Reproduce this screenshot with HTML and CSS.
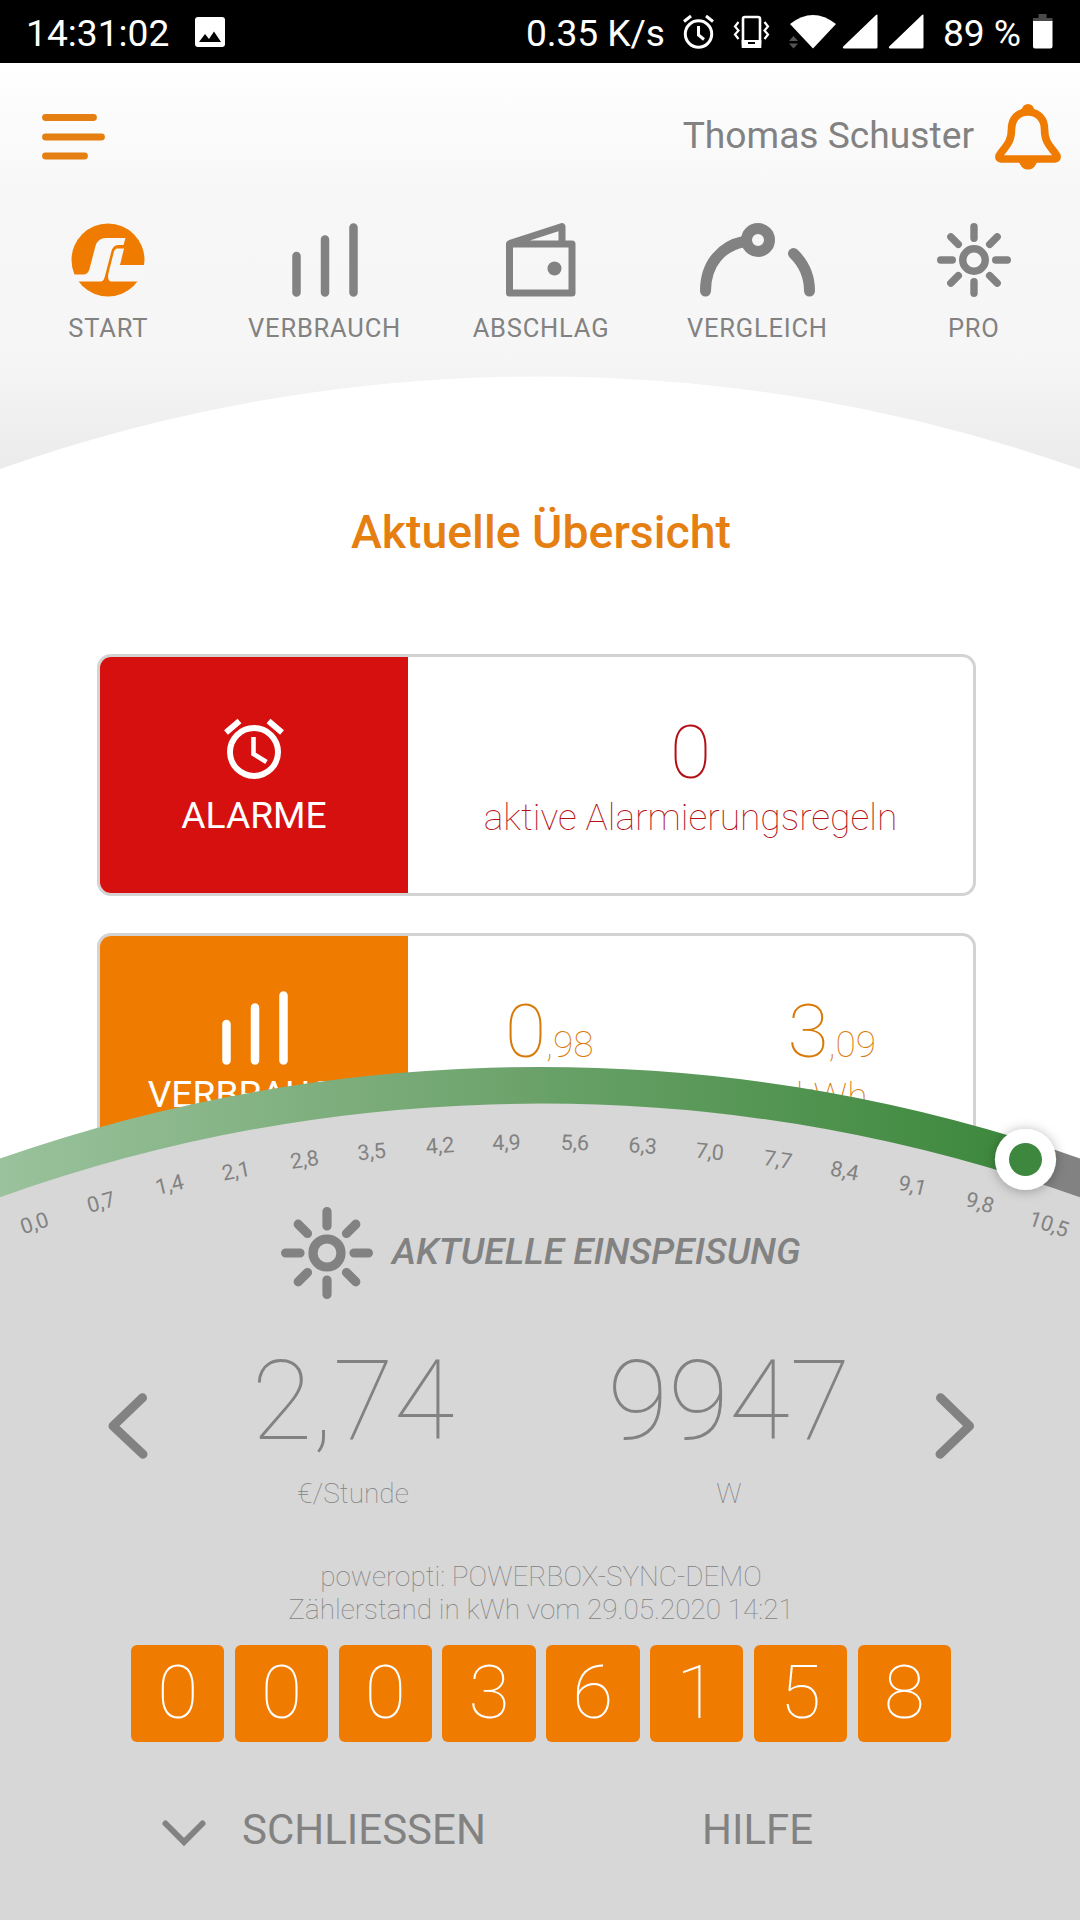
FILE: index.html
```html
<!DOCTYPE html>
<html lang="de">
<head>
<meta charset="utf-8">
<title>Aktuelle Übersicht</title>
<link rel="stylesheet" href="styles.css">
</head>
<body>
<svg class="defs" width="0" height="0" aria-hidden="true">
  <symbol id="sun" viewBox="-46 -46 92 92">
    <g fill="none" stroke="currentColor" stroke-width="9.2" stroke-linecap="round">
      <circle r="14"/>
      <path d="M0-41.4V-27M0 41.4V27M-41.4 0H-27M41.4 0H27M-28.8-28.8L-19.5-19.5M28.8 28.8L19.5 19.5M-28.8 28.8L-19.5 19.5M28.8-28.8L19.5-19.5"/>
    </g>
  </symbol>
  <symbol id="bars" viewBox="0 0 66 74">
    <path d="M4.5 33V69.5M33 16.500V69.500M61.500 4.500V69.500" fill="none" stroke="currentColor" stroke-width="8.500" stroke-linecap="round"/>
  </symbol>
</svg>

<div class="screen">
  <div class="status">
    <span class="clock">14:31:02</span>
    <svg class="pic" viewBox="0 0 30 30"><rect width="30" height="30" rx="3" fill="#fff"/><path d="M4 25l6-8 4 5 5-7.500 7 10.500z" fill="#000"/></svg>
    <span class="speed">0.35 K/s</span>
    <svg class="status-icons" viewBox="0 0 240 36">
      <g fill="none" stroke="#fff" stroke-width="3">
        <circle cx="15.500" cy="20" r="13.200"/>
        <path d="M15.500 12v9l5.500 4.500M1 7.500l7-5.500M30 7.500l-7-5.500"/>
        <rect x="60" y="3" width="17" height="29" rx="2" stroke-width="2.600"/>
        <path d="M55.500 8l-3.500 4.500 3.500 4-3.500 4 3.500 4.500M81.500 8l3.500 4.500-3.500 4 3.500 4-3.500 4.500" stroke-width="2.200"/>
      </g>
      <path d="M58.700 26h19.600v8h-19.600z" fill="#fff"/><path d="M65 29h7" stroke="#000" stroke-width="2"/>
      <path d="M107 10Q130-8 153 10L130 34.500Z" fill="#fff"/>
      <path d="M106 27l4.500-5 4.500 5zM106 29.500l4.500 5 4.500-5z" fill="#555"/>
      <path d="M194.500 1.500V33q0 1.500-1.500 1.500H161q-2-.5-.5-2.200L193 1q1.500-1 1.500.5zM240.500 1.500V33q0 1.500-1.500 1.500H207q-2-.5-.5-2.200L239 1q1.500-1 1.500.5z" fill="#fff"/>
    </svg>
    <span class="percent">89 %</span>
    <svg class="battery" viewBox="0 0 20 35"><path d="M5.500 0h8v4h6v4H0V4h5.500z" fill="#4a4a4a"/><path d="M0 7h19.500v25.500q0 2-2 2H2q-2 0-2-2z" fill="#fff"/></svg>
  </div>

  <header class="header">
    <div class="topline">
      <svg class="menu" viewBox="0 0 64 46"><path d="M3.500 3.500H51.500M3.500 23H59.500M3.500 42H42.500" stroke="#e67f12" stroke-width="6.800" stroke-linecap="round"/></svg>
      <span class="user">Thomas Schuster</span>
      <svg class="bell" viewBox="0 0 66 66"><path d="M33 8C22 8 16.500 16 16.500 25C16.500 41 8 44 4 52Q3.500 55 6 55H60Q62.500 55 62 52C58 44 49.500 41 49.500 25C49.500 16 44 8 33 8Z" fill="none" stroke="#ef7c00" stroke-width="7.600" stroke-linejoin="round"/><path d="M26.500 6Q28 0 33 0T39.500 6V10H26.500ZM22 57Q24.500 58 25.500 61Q28 65.500 33 65.500T40.500 61Q41.500 58 44 57Z" fill="#ef7c00"/></svg>
    </div>
    <nav class="nav">
      <a class="nav-item"><svg class="w73" viewBox="0 0 74 74"><circle cx="37" cy="37" r="36.500" fill="#ef7c00"/><path d="M0 51.500H13Q17 51 18.500 46L24.500 23Q27 15 35 15H54.500L52.500 22H47Q42 22.500 40.500 28L34 53Q33 58 30 58.500H0Z" fill="#f7f7f7"/><path d="M74 42H49L53 25.500H46Q44 25.500 43 28.500L37.500 50Q36 58 40 58.500H74Z" fill="#f7f7f7"/></svg><span>START</span></a>
      <a class="nav-item"><svg class="w66" viewBox="0 0 66 74"><use href="#bars"/></svg><span>VERBRAUCH</span></a>
      <a class="nav-item"><svg class="w73" viewBox="-1.500 0 74 74"><path d="M4 21H66.500V70H4ZM4 20.500L56.500 3.500V20" fill="none" stroke="currentColor" stroke-width="7" stroke-linejoin="round"/><circle cx="49" cy="45.500" r="7" fill="currentColor"/></svg><span>ABSCHLAG</span></a>
      <a class="nav-item"><svg class="w116" viewBox="0 0 116 74"><g fill="none" stroke="currentColor" stroke-width="11" stroke-linecap="round"><path d="M6.500 68C6.500 40 23 23 45 18.500"/><circle cx="59" cy="17" r="11.500"/><path d="M94.500 30.500Q110.500 46 110.500 68"/></g></svg><span>VERGLEICH</span></a>
      <a class="nav-item"><svg class="w73" viewBox="0 0 74 74"><use href="#sun"/></svg><span>PRO</span></a>
    </nav>
    <svg class="header-arc" viewBox="0 0 1080 93" preserveAspectRatio="none"><path d="M0 93A1622 1622 0 0 1 1080 93Z" fill="#fff"/></svg>
  </header>

  <main class="main">
    <h1>Aktuelle Übersicht</h1>
    <section class="card red">
      <div class="tile">
        <svg class="alarm" viewBox="0 0 60 60"><g fill="none" stroke="#fff" stroke-width="6"><circle cx="30" cy="33" r="24"/><path d="M2 13.500L15.500 2M58 13.500L44.500 2"/><path d="M29.500 18V35L42.500 43" stroke-width="4.600"/></g></svg>
        <span>ALARME</span>
      </div>
      <div class="value"><div class="num">0</div><div class="unit">aktive Alarmierungsregeln</div></div>
    </section>
    <section class="card orange">
      <div class="tile">
        <svg class="tile-bars" viewBox="0 0 66 74"><use href="#bars"/></svg>
        <span>VERBRAUCH</span>
      </div>
      <div class="value"><div class="num">0<small>,98</small></div><div class="unit">€</div></div>
      <div class="value"><div class="num">3<small>,09</small></div><div class="unit">kWh</div></div>
    </section>
  </main>

  <section class="panel">
    <svg class="gauge" viewBox="0 1060 1080 860">
      <defs>
        <linearGradient id="feed" gradientUnits="userSpaceOnUse" x1="0" y1="0" x2="1025" y2="0">
          <stop offset="0" stop-color="#9ac29c"/><stop offset=".52" stop-color="#6ca26a"/><stop offset=".54" stop-color="#68a167"/><stop offset="1" stop-color="#3c873c"/>
        </linearGradient>
        <filter id="knob" x="-50%" y="-50%" width="200%" height="200%"><feDropShadow dx="0" dy="1" stdDeviation="6" flood-color="#000" flood-opacity=".3"/></filter>
      </defs>
      <circle cx="540" cy="2707" r="1622" fill="#d7d7d7"/>
      <path d="M-40 1192.600A1621.700 1621.700 0 0 1 1025 1159.500" fill="none" stroke="url(#feed)" stroke-width="36.600"/>
      <path d="M1025 1159.500A1621.700 1621.700 0 0 1 1120 1192.600" fill="none" stroke="#828282" stroke-width="36.600"/>
      <circle cx="1025.500" cy="1159.500" r="30.600" fill="#fff" filter="url(#knob)"/>
      <circle cx="1025.500" cy="1159.500" r="16.500" fill="#3d873e"/>
      <g class="ticks">
        <text transform="translate(34.400 1223)rotate(-18.500)" y="7.500">0,0</text>
        <text transform="translate(101 1202)rotate(-16)" y="7.500">0,7</text>
        <text transform="translate(169.500 1184.500)rotate(-13.500)" y="7.500">1,4</text>
        <text transform="translate(236 1170.700)rotate(-11)" y="7.500">2,1</text>
        <text transform="translate(304.500 1159.500)rotate(-8.500)" y="7.500">2,8</text>
        <text transform="translate(371.500 1151.500)rotate(-6)" y="7.500">3,5</text>
        <text transform="translate(440 1145.500)rotate(-4)" y="7.500">4,2</text>
        <text transform="translate(506.500 1142.500)rotate(-1.500)" y="7.500">4,9</text>
        <text transform="translate(574.800 1142.500)rotate(1.500)" y="7.500">5,6</text>
        <text transform="translate(642.600 1145.500)rotate(4)" y="7.500">6,3</text>
        <text transform="translate(709.800 1151.500)rotate(6)" y="7.500">7,0</text>
        <text transform="translate(778 1159.500)rotate(8.500)" y="7.500">7,7</text>
        <text transform="translate(844.700 1170.700)rotate(11)" y="7.500">8,4</text>
        <text transform="translate(912.500 1185.500)rotate(13.500)" y="7.500">9,1</text>
        <text transform="translate(980 1202.500)rotate(16)" y="7.500">9,8</text>
        <text transform="translate(1049 1224)rotate(18.500)" y="7.500">10,5</text>
      </g>
    </svg>
    <div class="panel-body">
      <div class="feed-title"><svg class="sun-big" viewBox="0 0 92 92"><use href="#sun"/></svg><span>AKTUELLE EINSPEISUNG</span></div>
      <div class="readings">
        <svg class="chev" viewBox="0 0 40 66"><path d="M34.500 4.800L5 33L35 61.200" fill="none" stroke="#828282" stroke-width="9" stroke-linecap="round" stroke-linejoin="round"/></svg>
        <div class="reading"><div class="big">2,74</div><div class="small">€/Stunde</div></div>
        <div class="reading"><div class="big">9947</div><div class="small">W</div></div>
        <svg class="chev" viewBox="0 0 40 66"><path d="M5.500 4.800L34.500 33L5 61.200" fill="none" stroke="#828282" stroke-width="9" stroke-linecap="round" stroke-linejoin="round"/></svg>
      </div>
      <div class="meta"><div>poweropti: POWERBOX-SYNC-DEMO</div><div>Zählerstand in kWh vom 29.05.2020 14:21</div></div>
      <div class="counter"><span>0</span><span>0</span><span>0</span><span>3</span><span>6</span><span>1</span><span>5</span><span>8</span></div>
      <div class="actions">
        <svg class="down" viewBox="0 0 44 28"><path d="M3.500 3.500L22 22L40.500 3.500" fill="none" stroke="#828282" stroke-width="6" stroke-linecap="round"/></svg>
        <span class="close">SCHLIESSEN</span>
        <span class="help">HILFE</span>
      </div>
    </div>
  </section>
</div>
</body>
</html>
```

FILE: styles.css
```css
* { box-sizing: border-box; }
body { margin: 0; background: #fff; font-family: Roboto, "Liberation Sans", sans-serif; }
svg { display: block; flex: none; overflow: visible; }
.defs { position: absolute; }
.screen { position: relative; width: 1080px; height: 1920px; overflow: hidden; background: #fff; }

.status { display: flex; align-items: center; height: 63px; padding-left: 26px; background: #000; color: #fff; font-size: 37.200px; line-height: 44px; white-space: nowrap; }
.status span { padding-top: 2px; }
.clock { width: 169px; }
.pic { width: 30px; height: 30px; }
.speed { margin-left: 301px; width: 157px; letter-spacing: -.1px; }
.status-icons { width: 240px; height: 36px; }
.percent { margin-left: 20px; width: 90px; letter-spacing: -.1px; }
.battery { width: 20px; height: 35px; }

.header { position: relative; height: 406px; background: linear-gradient(#fff 0, #f7f7f7 130px, #f6f6f6 290px, #ebebeb 406px); color: #828282; }
.topline { display: flex; align-items: center; height: 137px; padding: 10px 19px 0 42px; }
.menu { width: 64px; height: 46px; }
.user { margin: -4px 21px 0 auto; font-size: 37.200px; line-height: 44px; }
.bell { width: 66px; height: 66px; }
.nav { display: grid; grid-template-columns: repeat(5, 216.400px); padding-top: 23px; }
.nav-item { display: flex; flex-direction: column; align-items: center; gap: 16px; font-size: 25.500px; line-height: 30px; letter-spacing: .8px; }
.nav-item svg { height: 74px; }
.w73 { width: 74px; }
.w66 { width: 66px; }
.w116 { width: 116px; }
.header-arc { position: absolute; left: 0; bottom: 0; width: 1080px; height: 93px; }

.main { padding: 0 104px 0 97px; }
h1 { margin: 36px 0 95px; padding-left: 9px; text-align: center; font-size: 46.400px; line-height: 54px; font-weight: 500; color: #e67f12; }
.card { display: flex; height: 242px; margin-bottom: 37px; border: 3px solid #d3d3d3; border-radius: 14px; overflow: hidden; }
.tile { display: flex; flex-direction: column; align-items: center; flex: none; width: 308px; color: #fff; font-size: 37.200px; line-height: 44px; }
.red .tile { background: #d60f0f; }
.orange .tile { background: #ef7c00; }
.alarm { width: 60px; height: 60px; margin: 62px 0 14px; }
.tile-bars { width: 66px; height: 74px; margin: 55px 0 7px 1px; }
.value { flex: 1; padding-top: 50px; text-align: center; font-weight: 100; }
.red .value { color: #b30f14; }
.orange .value { color: #d97a08; }
.num { height: 88px; font-size: 75px; line-height: 90px; }
.num small { font-size: 37px; line-height: 0; }
.unit { font-size: 37.200px; line-height: 44px; }

.panel { position: absolute; left: 0; top: 1060px; width: 1080px; height: 860px; color: #828282; }
.gauge { position: absolute; left: 0; top: 0; width: 1080px; height: 860px; overflow: hidden; }
.ticks { font-size: 21.500px; text-anchor: middle; fill: #828282; }
.panel-body { position: relative; padding-top: 147px; }
.feed-title { display: flex; align-items: center; gap: 19px; padding-left: 281px; height: 92px; font-size: 37.200px; font-style: italic; font-weight: 500; }
.sun-big { width: 92px; height: 92px; }
.feed-title span { margin-top: -5px; }
.readings { display: flex; height: 213px; padding: 37px 105px 0 108px; font-weight: 100; text-align: center; }
.chev { width: 40px; height: 66px; margin-top: 57px; }
.reading { width: 376px; }
.readings .reading:nth-child(2) { margin-left: 17px; }
.readings .chev:last-child { margin-left: auto; }
.big { font-size: 111px; line-height: 130px; }
.small { margin-top: 11px; font-size: 28px; line-height: 34px; }
.meta { margin-top: 48px; padding-left: 2px; text-align: center; font-weight: 100; font-size: 27.900px; line-height: 33px; }
.counter { display: grid; grid-template-columns: repeat(8, 1fr); gap: 10.400px; margin: 19px 129px 0 131px; height: 97px; }
.counter span { border-radius: 6px; background: #ef7c00; color: #fff; font-size: 75px; line-height: 95px; font-weight: 100; text-align: center; }
.actions { display: flex; align-items: center; margin-top: 63px; height: 50px; padding-left: 162px; font-size: 42px; line-height: 50px; }
.down { width: 44px; height: 28px; margin-top: 7px; }
.close { margin-left: 36px; width: 460px; }
```
